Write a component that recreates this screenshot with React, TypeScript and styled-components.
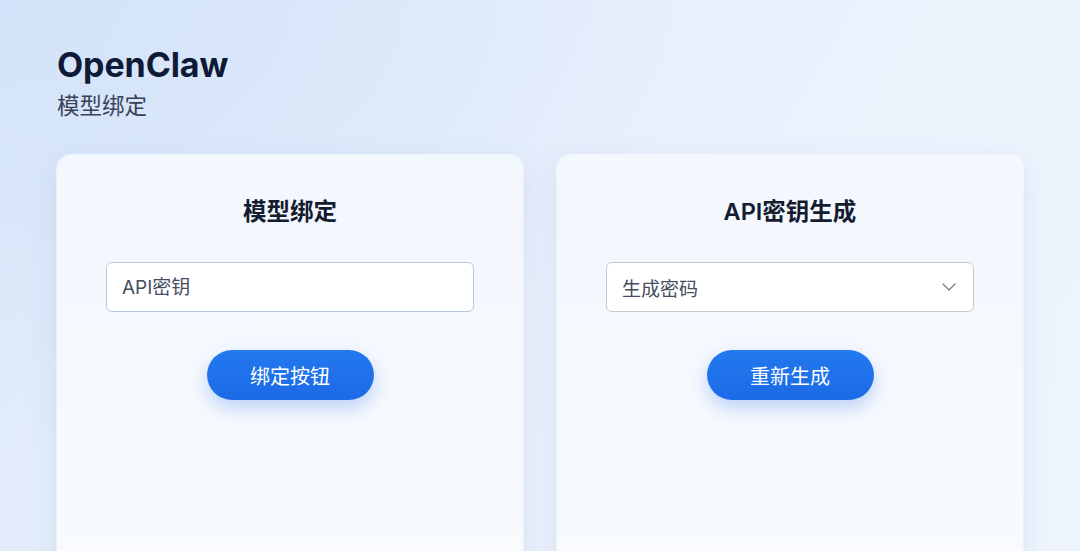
import React, { useState } from "react";
import styled, { createGlobalStyle } from "styled-components";
import { ChevronDown } from "lucide-react";

const GlobalStyle = createGlobalStyle`
  html, body {
    margin: 0;
    padding: 0;
    height: 100%;
    overflow: hidden;
  }
  body {
    font-family: Inter, "Noto Sans CJK SC", sans-serif;
    background: #e6eefb;
  }
`;

const Page = styled.div`
  width: 1080px;
  height: 551px;
  overflow: hidden;
  box-sizing: border-box;
  padding: 44px 57px 0;
  background:
    radial-gradient(ellipse 720px 440px at 0% 0%, #d4e3f9 0%, rgba(212, 227, 249, 0) 100%),
    linear-gradient(120deg, #dde9fa 0%, #eaf1fc 55%, #eff5fd 100%);
`;

const Header = styled.header`
  display: flex;
  flex-direction: column;
  gap: 5px;
`;

const Brand = styled.h1`
  margin: 0;
  font-size: 34px;
  line-height: 42px;
  font-weight: 700;
  color: #0e1a36;
  letter-spacing: -0.1px;
`;

const Subtitle = styled.div`
  font-size: 22.5px;
  line-height: 30px;
  color: #384257;
`;

const Cards = styled.div`
  display: grid;
  grid-template-columns: 466px 466px;
  gap: 34px;
  margin-top: 34px;
`;

const Card = styled.section`
  height: 430px;
  box-sizing: border-box;
  padding: 41px 49px 0;
  border-radius: 14px;
  background: linear-gradient(180deg, #f3f7fe 0%, #f6f9fe 60%, #f9fbfe 100%);
  box-shadow: 0 8px 28px rgba(120, 150, 200, 0.18), 0 0 0 1px rgba(255, 255, 255, 0.7);
  display: flex;
  flex-direction: column;
  align-items: center;
`;

const CardTitle = styled.h2`
  margin: 0;
  font-size: 23.5px;
  line-height: 32px;
  font-weight: 600;
  color: #141c30;
`;

const Field = styled.div<{ $tone: "blue" | "grey" }>`
  margin-top: 34px;
  width: 100%;
  height: 50px;
  box-sizing: border-box;
  display: flex;
  align-items: center;
  justify-content: space-between;
  padding: 0 12px 0 15px;
  background: #ffffff;
  border-radius: 6px;
  border: 1px solid ${(p) => (p.$tone === "blue" ? "#b9c9e2" : "#c6c9cf")};
  font-size: 19px;
  color: #454d5e;
`;

const FieldInput = styled.input`
  border: none;
  outline: none;
  background: transparent;
  font: inherit;
  color: inherit;
  width: 100%;
  padding: 0;
  &::placeholder {
    color: #454d5e;
  }
`;

const Chevron = styled(ChevronDown)`
  color: #737a87;
  flex-shrink: 0;
`;

const PillButton = styled.button`
  margin-top: 38px;
  width: 167px;
  height: 50px;
  border: none;
  border-radius: 25px;
  background: linear-gradient(180deg, #2379ee 0%, #1b6ae6 100%);
  color: #ffffff;
  font-family: inherit;
  font-size: 20px;
  font-weight: 400;
  box-shadow: 0 8px 18px rgba(40, 110, 230, 0.28);
  cursor: pointer;
`;

export default function App() {
  const [apiKey, setApiKey] = useState("");

  return (
    <>
      <GlobalStyle />
      <Page>
        <Header>
          <Brand>OpenClaw</Brand>
          <Subtitle>模型绑定</Subtitle>
        </Header>
        <Cards>
          <Card>
            <CardTitle>模型绑定</CardTitle>
            <Field $tone="blue">
              <FieldInput
                placeholder="API密钥"
                value={apiKey}
                onChange={(e) => setApiKey(e.target.value)}
              />
            </Field>
            <PillButton>绑定按钮</PillButton>
          </Card>
          <Card>
            <CardTitle>API密钥生成</CardTitle>
            <Field $tone="grey">
              <span>生成密码</span>
              <Chevron size={24} strokeWidth={1.3} />
            </Field>
            <PillButton>重新生成</PillButton>
          </Card>
        </Cards>
      </Page>
    </>
  );
}
